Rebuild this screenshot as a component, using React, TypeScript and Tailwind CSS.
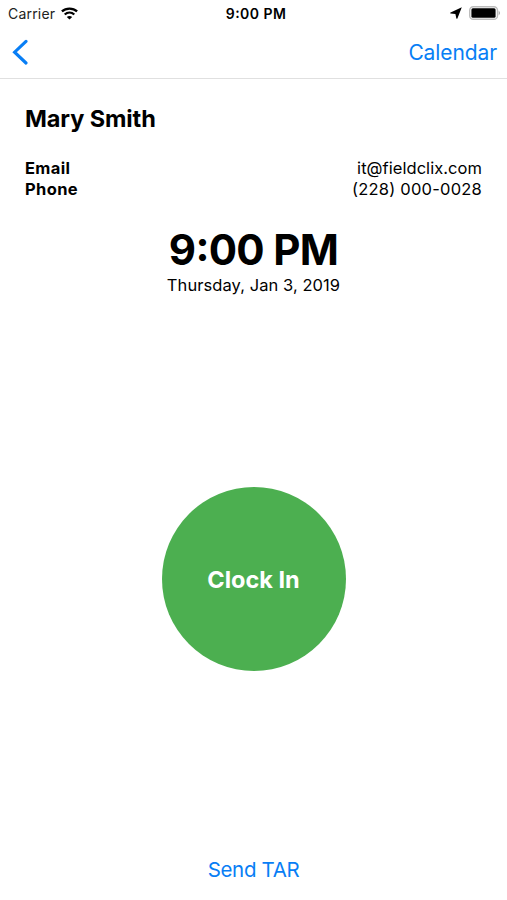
import React from 'react';

interface ContactRowProps {
    label: string;
    value: string;
    valueClassName: string;
}

const employee = {
    name: 'Mary Smith',
    email: 'it@fieldclix.com',
    phone: '(228) 000-0028',
};

const WifiIcon: React.FC = () => (
    <svg className="w-[17px] h-[13px]" viewBox="0 0 17 13" fill="none" stroke="black" strokeWidth="2.3">
        <path d="M.9 4.4C5.1.6 11.9.6 16.1 4.4" />
        <path d="M3.7 7.5C6.5 5 10.5 5 13.3 7.5" />
        <path d="M8.5 12.6 5.8 10C7.4 8.6 9.6 8.6 11.2 10Z" fill="black" stroke="none" />
    </svg>
);

const LocationIcon: React.FC = () => (
    <svg className="w-3 h-3" viewBox="0 0 12 12">
        <path d="M11.8.2 7.4 11.6Q6.8 12.2 6.3 11.3L5.4 6.9.6 6.6Q-.4 6.1.6 5.4Z" fill="black" />
    </svg>
);

const BatteryIcon: React.FC = () => (
    <svg className="w-8 h-[14px]" viewBox="0 0 32 14">
        <rect x="0.7" y="0.7" width="27.8" height="12.6" rx="3.6" fill="none" stroke="#bcbcbc" strokeWidth="1.4" />
        <rect x="2.4" y="2.2" width="24.2" height="9.6" rx="1.5" fill="black" />
        <path d="M29.7 4.8C31.4 5.5 31.4 8.5 29.7 9.2Z" fill="#a5a5a5" />
    </svg>
);

const StatusBar: React.FC = () => (
    <div className="grid grid-cols-3 items-center h-[26px] pl-2 pr-[6px] text-[14px]">
        <div className="flex items-center gap-[6px]">
            <span className="tracking-[0.2px] text-[#222]">Carrier</span>
            <WifiIcon />
        </div>
        <span className="pl-[3px] text-center font-semibold tracking-[0.45px]">
            9<span className="relative -top-px">:</span>00 PM
        </span>
        <div className="flex items-center justify-end gap-[7px]">
            <LocationIcon />
            <BatteryIcon />
        </div>
    </div>
);

const NavBar: React.FC = () => (
    <nav className="flex items-center justify-between h-[53px] pl-3 pr-[10px] border-b border-[#e0e0e0] text-[#087ef5]">
        <button aria-label="Back">
            <svg className="w-[17px] h-[26px]" viewBox="0 0 17 26" fill="none" stroke="currentColor" strokeWidth="3.1" strokeLinecap="round">
                <path d="M14 2.4 2.6 13.2 14 24" />
            </svg>
        </button>
        <button className="pt-px text-[21px] tracking-[-0.1px]">Calendar</button>
    </nav>
);

const ContactRow: React.FC<ContactRowProps> = ({ label, value, valueClassName }) => (
    <div className="flex justify-between h-[21px] leading-[21px] text-[16.5px]">
        <span className="font-bold tracking-[0.35px]">{label}</span>
        <span className={valueClassName}>{value}</span>
    </div>
);

const App: React.FC = () => {
    return (
        <div className="flex flex-col h-screen bg-white text-black overflow-hidden font-['Inter','Liberation_Sans',sans-serif]">
            <StatusBar />
            <NavBar />
            <main className="flex flex-col flex-1 px-[25px] pt-6">
                <h1 className="h-8 leading-8 text-[23.5px] font-bold tracking-[-0.1px]">{employee.name}</h1>
                <div className="mt-[23px]">
                    <ContactRow label="Email" value={employee.email} valueClassName="tracking-[0.05px]" />
                    <ContactRow label="Phone" value={employee.phone} valueClassName="tracking-[0.22px]" />
                </div>
                <div className="mt-6 text-center">
                    <p className="h-[50px] leading-[52px] text-[42px] font-bold tracking-[-0.7px]">
                        9<span className="relative -top-[4px]">:</span>00 PM
                    </p>
                    <p className="h-[22px] leading-[22px] text-[16.5px] tracking-[0.07px]">Thursday, Jan 3, 2019</p>
                </div>
                <button className="mt-[191px] pt-px self-center size-[184px] shrink-0 rounded-full bg-[#4caf50] text-white text-[23.5px] font-bold">
                    Clock In
                </button>
                <button className="mt-auto mb-[14px] self-center h-8 text-[20.5px] leading-8 tracking-[-0.35px] text-[#087ef5]">
                    Send TAR
                </button>
            </main>
        </div>
    );
};

export default App;
